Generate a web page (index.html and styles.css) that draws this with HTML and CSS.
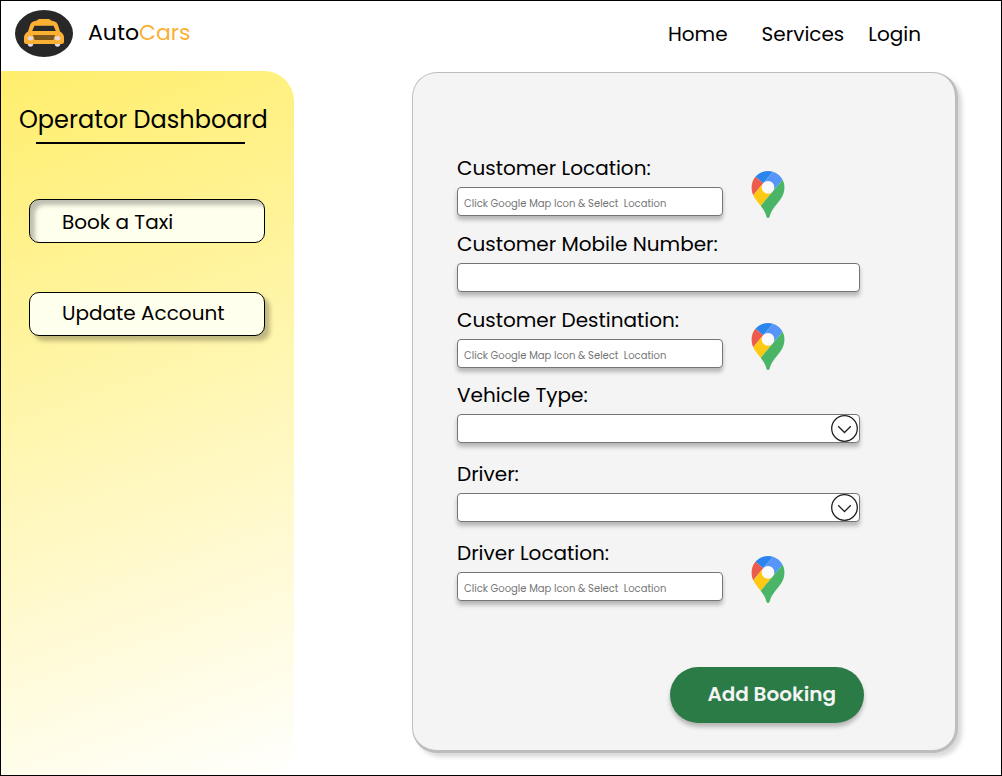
FILE: index.html
```html
<!DOCTYPE html>
<html lang="en">
<head>
<meta charset="utf-8">
<meta name="viewport" content="width=device-width, initial-scale=1">
<title>AutoCars - Operator Dashboard</title>
<link rel="stylesheet" href="styles.css">
</head>
<body>
<svg class="sprite" aria-hidden="true">
  <symbol id="pin" viewBox="0 0 92.3 132.3">
    <circle cx="46.2" cy="46.2" r="19" fill="#fafafa"/>
    <path fill="#2a86ee" d="M60.2 2.2C55.8.8 51 0 46.1 0 32 0 19.3 6.4 10.8 16.5l21.8 18.3L60.2 2.2z"/>
    <path fill="#ed5b4a" d="M10.8 16.5C4.1 24.5 0 34.9 0 46.1c0 8.7 1.7 15.7 4.6 22l28-33.3-21.8-18.3z"/>
    <path fill="#5696fa" d="M46.2 28.5c9.8 0 17.7 7.9 17.7 17.7 0 4.3-1.6 8.3-4.2 11.4 0 0 13.9-16.6 27.5-32.7-5.6-10.8-15.3-19-27-22.7L32.6 34.8c3.3-3.8 8.1-6.3 13.6-6.3"/>
    <path fill="#fdc915" d="M46.2 63.8c-9.8 0-17.7-7.9-17.7-17.7 0-4.3 1.5-8.3 4.1-11.3l-28 33.3c4.8 10.6 12.8 19.2 21 29.9l34.1-40.5c-3.3 3.9-8.1 6.3-13.5 6.3"/>
    <path fill="#4ab566" d="M59.1 109.2c15.4-24.1 33.3-35 33.3-63 0-7.7-1.9-14.9-5.2-21.3L25.6 98c2.6 3.4 5.3 7.3 7.9 11.3 9.4 14.5 6.8 23.1 12.8 23.1s3.4-8.7 12.8-23.2"/>
  </symbol>
  <symbol id="chevron" viewBox="0 0 27 27">
    <circle cx="13.500" cy="13.500" r="12.800" fill="none" stroke="#222" stroke-width="1.3"/>
    <path d="M7.200 11.300l6.300 6.200 6.300-6.200" fill="none" stroke="#222" stroke-width="1.3"/>
  </symbol>
</svg>

<header class="header">
  <a class="brand" href="#">
    <svg class="brand-logo" viewBox="0 0 58 47" aria-hidden="true">
      <ellipse cx="29" cy="23.5" rx="29" ry="23.5" fill="#282828"/>
      <path fill="#fbb034" d="M22 10.500Q22.500 9 24.500 9H33.500Q35.500 9 36 10.500L39 11.200Q42 12 43 15L45 21.500Q49 24 49 27.500V31.500Q49 34 46.500 34H11.500Q9 34 9 31.500V27.500Q9 24 13 21.500L15 15Q16 12 19 11.200Z"/>
      <path fill="#282828" d="M19.500 15.700H38.500L40.800 21H17.200Z"/>
      <path fill="#7b571d" d="M18 25H40L38.500 30H19.500Z"/>
      <ellipse cx="15.500" cy="28.300" rx="2.800" ry="2.100" fill="#e4d8e8"/>
      <ellipse cx="42.500" cy="28.300" rx="2.800" ry="2.100" fill="#e4d8e8"/>
      <path fill="#e4d8e8" d="M12.700 34H18.300Q18 36.800 15.500 36.800T12.700 34ZM39.700 34H45.300Q45 36.800 42.500 36.800T39.700 34Z"/>
    </svg>
    <span class="brand-name">Auto<span class="brand-accent">Cars</span></span>
  </a>
  <nav class="nav">
    <a class="nav-home" href="#">Home</a>
    <a href="#">Services</a>
    <a href="#">Login</a>
  </nav>
</header>

<div class="layout">
  <aside class="sidebar">
    <h1 class="sidebar-title">Operator Dashboard</h1>
    <hr class="sidebar-rule">
    <button class="side-button side-button-active" type="button">Book a Taxi</button>
    <button class="side-button" type="button">Update Account</button>
  </aside>

  <main class="content">
    <form class="card">
      <div class="field field-map">
        <label for="location">Customer Location:</label>
        <input id="location" type="text" placeholder="Click Google Map Icon &amp; Select  Location">
        <button class="map-button" type="button" aria-label="Select customer location"><svg><use href="#pin"/></svg></button>
      </div>
      <div class="field">
        <label for="mobile">Customer Mobile Number:</label>
        <input id="mobile" type="tel">
      </div>
      <div class="field field-map">
        <label for="destination">Customer Destination:</label>
        <input id="destination" type="text" placeholder="Click Google Map Icon &amp; Select  Location">
        <button class="map-button" type="button" aria-label="Select customer destination"><svg><use href="#pin"/></svg></button>
      </div>
      <div class="field field-tight">
        <label for="vehicle">Vehicle Type:</label>
        <div class="select">
          <select id="vehicle"><option></option></select>
          <svg class="select-icon"><use href="#chevron"/></svg>
        </div>
      </div>
      <div class="field field-loose">
        <label for="driver">Driver:</label>
        <div class="select">
          <select id="driver"><option></option></select>
          <svg class="select-icon"><use href="#chevron"/></svg>
        </div>
      </div>
      <div class="field field-map field-loose">
        <label for="driver-location">Driver Location:</label>
        <input id="driver-location" type="text" placeholder="Click Google Map Icon &amp; Select  Location">
        <button class="map-button" type="button" aria-label="Select driver location"><svg><use href="#pin"/></svg></button>
      </div>
      <div class="actions">
        <button class="submit" type="button">Add Booking</button>
      </div>
    </form>
  </main>
</div>
</body>
</html>
```
FILE: styles.css
```css
* {
  box-sizing: border-box;
}

body {
  margin: 0;
  min-height: 100vh;
  display: flex;
  flex-direction: column;
  border: 1px solid #000;
  background: #fff;
  color: #000;
  font-family: Poppins, Inter, "Liberation Sans", sans-serif;
  font-size: 20px;
  line-height: 30px;
}

a {
  color: inherit;
  text-decoration: none;
}

button,
input,
select {
  font: inherit;
  color: inherit;
}

button {
  cursor: pointer;
}

.sprite {
  position: absolute;
  width: 0;
  height: 0;
}

.header {
  display: flex;
  justify-content: space-between;
  align-items: center;
  min-height: 70px;
  padding: 0 80px 5px 14px;
}

.brand {
  display: flex;
  align-items: center;
  gap: 15px;
  font-size: 22px;
}

.brand-logo {
  width: 58px;
  height: 47px;
}

.brand-name {
  padding-bottom: 2px;
}

.brand-accent {
  color: #fbb034;
}

.nav {
  display: flex;
  gap: 24px;
}

.nav-home {
  margin-right: 10px;
}

.layout {
  flex: 1;
  display: flex;
}

.sidebar {
  flex: 0 0 293px;
  min-width: 0;
  padding: 32px 29px 32px 28px;
  border-radius: 0 30px 30px 0;
  background: linear-gradient(160deg, #ffee6c, #fffffd);
}

.sidebar-title {
  margin: 0 0 0 -10px;
  font-size: 24px;
  line-height: 34px;
  font-weight: 400;
  white-space: nowrap;
}

.sidebar-rule {
  height: 2px;
  margin: 5px 20px 55px 7px;
  border: 0;
  background: #000;
}

.side-button {
  display: block;
  width: 100%;
  height: 44px;
  margin-bottom: 49px;
  padding: 0 32px 2px;
  border: 1px solid #000;
  border-radius: 10px;
  background: #ffffed;
  box-shadow: 5px 5px 4px rgba(0, 0, 0, 0.25);
  text-align: left;
}

.side-button-active {
  padding: 2px 32px 0;
  box-shadow: inset 5px 5px 4px rgba(0, 0, 0, 0.25);
}

.content {
  flex: 1;
  display: flex;
  padding: 1px 43px 22px 118px;
}

.card {
  flex: 1;
  padding: 84px 44px 26px;
  border: 1px solid #bdbdbd;
  border-width: 1px 3px 3px 1px;
  border-radius: 25px;
  background: #f4f4f4;
  box-shadow: 4px 4px 4px rgba(0, 0, 0, 0.15);
}

.field {
  display: grid;
  grid-template-columns: minmax(0, 403px);
  grid-template-rows: 30px 29px;
  margin-bottom: 17px;
}

.field-map {
  grid-template-columns: minmax(0, 266px) 34px;
  column-gap: 28px;
}

.field-map label {
  grid-column: 1;
  white-space: nowrap;
}

.field label {
  line-height: 23px;
}

.field-tight {
  margin-top: -1px;
}

.field-loose {
  margin-top: 20px;
}

.field input,
.field select {
  width: 100%;
  height: 29px;
  padding: 0 6px;
  border: 1px solid #757575;
  border-radius: 4px;
  background: #fff;
  box-shadow: 0 4px 4px rgba(0, 0, 0, 0.25);
  font-size: 16px;
}

.field input::placeholder {
  color: #757575;
  font-size: 10px;
  opacity: 1;
}

.map-button {
  grid-column: 2;
  grid-row: 1 / 3;
  align-self: end;
  height: 47px;
  margin-bottom: -2px;
  padding: 0;
  border: 0;
  background: none;
}

.map-button svg {
  display: block;
  width: 34px;
  height: 47px;
}

.select {
  position: relative;
}

.field select {
  display: block;
  appearance: none;
}

.select-icon {
  position: absolute;
  top: 1px;
  right: 2px;
  width: 27px;
  height: 27px;
  pointer-events: none;
}

.actions {
  display: flex;
  justify-content: flex-end;
  max-width: 407px;
  margin-top: 66px;
}

.submit {
  height: 56px;
  padding: 0 28px 2px 37px;
  border: 0;
  border-radius: 28px;
  background: #2a7b46;
  box-shadow: 0 4px 4px rgba(0, 0, 0, 0.25);
  color: #f4f4f4;
  font-weight: 600;
}
```
